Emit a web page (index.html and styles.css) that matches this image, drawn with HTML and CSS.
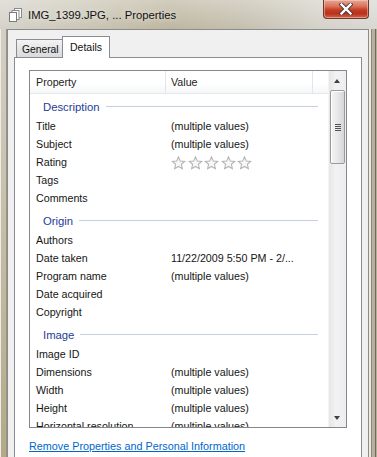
FILE: index.html
```html
<!DOCTYPE html>
<html lang="en">
<head>
    <meta charset="UTF-8">
    <title>IMG_1399.JPG, ... Properties</title>
    <link rel="stylesheet" href="styles.css">
</head>
<body>
    <div class="window">
        <!-- title bar -->
        <div class="titlebar">
            <svg class="app-icon" width="13" height="14" viewBox="0 0 13 14">
                <rect x="5.5" y="0.5" width="7" height="9" fill="#fff" stroke="#8a8a8a"/>
                <rect x="3" y="2.5" width="7" height="9" fill="#fff" stroke="#8a8a8a"/>
                <rect x="0.5" y="4.5" width="7" height="9" fill="#fff" stroke="#7a7a7a"/>
            </svg>
            <span class="title">IMG_1399.JPG, ... Properties</span>
            <div class="close-btn">
                <svg width="14" height="12" viewBox="0 0 14 12">
                    <path d="M2.5 1.5 L11.5 10.5 M11.5 1.5 L2.5 10.5" stroke="#4a3a36" stroke-width="4.2" stroke-linecap="square"/>
                    <path d="M2.5 1.5 L11.5 10.5 M11.5 1.5 L2.5 10.5" stroke="#fff" stroke-width="2.4" stroke-linecap="square"/>
                </svg>
            </div>
        </div>

        <div class="frame-body">
            <div class="frame-side left"></div>
            <div class="dialog">
                <!-- tabs -->
                <div class="tabs">
                    <div class="tab">General</div>
                    <div class="tab active">Details</div>
                </div>

                <div class="panel">
                    <div class="listview">
                        <div class="lv-main">
                            <div class="lv-header">
                                <div class="col-prop">Property</div>
                                <div class="col-val">Value</div>
                                <div class="col-rest"></div>
                            </div>
                            <div class="lv-body">
                                <div class="group first"><span>Description</span><i></i></div>
                                <div class="row"><span class="k">Title</span><span class="v">(multiple values)</span></div>
                                <div class="row"><span class="k">Subject</span><span class="v">(multiple values)</span></div>
                                <div class="row">
                                    <span class="k">Rating</span>
                                    <span class="v stars">
                                        <svg width="15" height="14" viewBox="0 0 14 13"><path d="M7 0.8 L8.7 4.6 L12.8 5 L9.7 7.7 L10.6 11.8 L7 9.7 L3.4 11.8 L4.3 7.7 L1.2 5 L5.3 4.6 Z" fill="#f7f7f7" stroke="#b4b4b4"/></svg>
                                        <svg width="15" height="14" viewBox="0 0 14 13"><path d="M7 0.8 L8.7 4.6 L12.8 5 L9.7 7.7 L10.6 11.8 L7 9.7 L3.4 11.8 L4.3 7.7 L1.2 5 L5.3 4.6 Z" fill="#f7f7f7" stroke="#b4b4b4"/></svg>
                                        <svg width="15" height="14" viewBox="0 0 14 13"><path d="M7 0.8 L8.7 4.6 L12.8 5 L9.7 7.7 L10.6 11.8 L7 9.7 L3.4 11.8 L4.3 7.7 L1.2 5 L5.3 4.6 Z" fill="#f7f7f7" stroke="#b4b4b4"/></svg>
                                        <svg width="15" height="14" viewBox="0 0 14 13"><path d="M7 0.8 L8.7 4.6 L12.8 5 L9.7 7.7 L10.6 11.8 L7 9.7 L3.4 11.8 L4.3 7.7 L1.2 5 L5.3 4.6 Z" fill="#f7f7f7" stroke="#b4b4b4"/></svg>
                                        <svg width="15" height="14" viewBox="0 0 14 13"><path d="M7 0.8 L8.7 4.6 L12.8 5 L9.7 7.7 L10.6 11.8 L7 9.7 L3.4 11.8 L4.3 7.7 L1.2 5 L5.3 4.6 Z" fill="#f7f7f7" stroke="#b4b4b4"/></svg>
                                    </span>
                                </div>
                                <div class="row"><span class="k">Tags</span><span class="v"></span></div>
                                <div class="row"><span class="k">Comments</span><span class="v"></span></div>

                                <div class="group"><span>Origin</span><i></i></div>
                                <div class="row"><span class="k">Authors</span><span class="v"></span></div>
                                <div class="row"><span class="k">Date taken</span><span class="v">11/22/2009 5:50 PM - 2/...</span></div>
                                <div class="row"><span class="k">Program name</span><span class="v">(multiple values)</span></div>
                                <div class="row"><span class="k">Date acquired</span><span class="v"></span></div>
                                <div class="row"><span class="k">Copyright</span><span class="v"></span></div>

                                <div class="group"><span>Image</span><i></i></div>
                                <div class="row"><span class="k">Image ID</span><span class="v"></span></div>
                                <div class="row"><span class="k">Dimensions</span><span class="v">(multiple values)</span></div>
                                <div class="row"><span class="k">Width</span><span class="v">(multiple values)</span></div>
                                <div class="row"><span class="k">Height</span><span class="v">(multiple values)</span></div>
                                <div class="row"><span class="k">Horizontal resolution</span><span class="v">(multiple values)</span></div>
                            </div>
                        </div>

                        <!-- vertical scrollbar -->
                        <div class="scrollbar">
                            <div class="sb-arrow up"></div>
                            <div class="sb-track">
                                <div class="sb-thumb"><div class="grip"></div></div>
                            </div>
                            <div class="sb-arrow down"></div>
                        </div>
                    </div>

                    <a class="remove-link" href="#">Remove Properties and Personal Information</a>
                </div>
            </div>
            <div class="frame-side right"></div>
        </div>
    </div>
</body>
</html>
```

FILE: styles.css
```css
/* page */
html, body {
    margin: 0;
    padding: 0;
}

body {
    width: 377px;
    height: 457px;
    overflow: hidden;
    font-family: "Liberation Sans", Arial, sans-serif;
    color: #111;
    background: #c9c4b4;
}

.window {
    display: flex;
    flex-direction: column;
    height: 457px;
    background: linear-gradient(to right, #d3d0c7 0%, #c9c4b3 20%, #bab29a 45%, #c2bcaa 65%, #d2cfc6 85%, #d7d5cf 100%);
}

/* title bar */
.titlebar {
    height: 29px;
    display: flex;
    align-items: center;
    padding: 0 8px 0 9px;
    background: linear-gradient(to bottom, rgba(255,255,255,0.35), rgba(255,255,255,0.05));
}

.app-icon {
    margin-top: 1px;
    margin-right: 6px;
}

.title {
    font-size: 11.3px;
    color: #111;
    text-shadow: 0 0 6px rgba(255, 255, 255, 0.8);
    margin-top: 1px;
}

.close-btn {
    margin-left: auto;
    align-self: flex-start;
    width: 44px;
    height: 18px;
    border: 1px solid #6a3a30;
    border-top: none;
    border-radius: 0 0 4px 4px;
    background: linear-gradient(to bottom, #e8a898 0%, #d9725a 35%, #c63d24 55%, #b8321c 75%, #d4644a 100%);
    box-shadow: inset 0 0 0 1px rgba(255, 220, 210, 0.45);
    display: flex;
    align-items: center;
    justify-content: center;
}

/* frame */
.frame-body {
    flex: 1;
    display: flex;
    min-height: 0;
}

.frame-side.left {
    width: 7px;
    background: linear-gradient(to bottom, #d2cfc6 0%, #c4bda6 50%, #b3a98a 100%);
    box-shadow: inset 3px 0 0 -2px #efece4, inset -2px 0 0 -1px #9c9480;
}

.frame-side.right {
    width: 8px;
    background: linear-gradient(to right, #ece9e2 0px, #ece9e2 2px, #8a8678 2px, #8a8678 3px, #b7b09a 3px, #b7b09a 6px, #6f6b5f 6px, #6f6b5f 7px, #b5ae98 7px);
}

.dialog {
    flex: 1;
    display: flex;
    flex-direction: column;
    min-height: 0;
    background: #f0f0f0;
    border: 1px solid #8c8c8c;
    border-bottom: none;
    padding: 6px 6px 0 6px;
}

/* tabs */
.tabs {
    display: flex;
    align-items: flex-end;
    height: 21px;
    padding-left: 2px;
    position: relative;
    z-index: 1;
}

.tab {
    font-size: 10.3px;
    box-sizing: border-box;
    width: 47px;
    height: 18px;
    padding: 4px 0 0 5px;
    border: 1px solid #898c95;
    border-bottom: none;
    background: linear-gradient(to bottom, #f3f3f3, #e3e3e3 60%, #dadada);
    color: #111;
}

.tab.active {
    height: 22px;
    margin-bottom: -1px;
    margin-left: -1px;
    width: 48px;
    padding: 4px 0 0 7px;
    background: #fff;
    font-size: 10.5px;
}

/* content panel */
.panel {
    flex: 1;
    background: #fff;
    border: 1px solid #898c95;
    border-bottom: none;
    padding: 12px 14px 0 14px;
}

.listview {
    width: 318px;
    height: 358px;
    box-sizing: border-box;
    border: 1px solid #828790;
    display: flex;
}

.lv-main {
    flex: 1;
    min-width: 0;
    display: flex;
    flex-direction: column;
}

.lv-header {
    height: 23px;
    display: flex;
    font-size: 10.7px;
    color: #222;
    background: linear-gradient(to bottom, #ffffff 0%, #ffffff 55%, #f5f6f7 100%);
    border-bottom: 1px solid #e3e6ea;
    box-sizing: border-box;
}

.lv-header > div {
    box-sizing: border-box;
    border-right: 1px solid #e3e5e8;
    line-height: 22px;
}

.col-prop {
    width: 136px;
    padding-left: 6px;
}

.col-val {
    width: 147px;
    padding-left: 5px;
}

.col-rest {
    flex: 1;
    border-right: none !important;
}

.lv-body {
    flex: 1;
    overflow: hidden;
    font-size: 10.7px;
}

.group {
    height: 24px;
    display: flex;
    align-items: center;
    padding: 3px 10px 0 13px;
    box-sizing: border-box;
    color: #1e3c96;
    font-size: 11.3px;
}

.group.first {
    height: 23px;
    padding-top: 2px;
}

.group i {
    flex: 1;
    height: 1px;
    margin-left: 6px;
    background: #c7d0e2;
}

.row {
    height: 18px;
    display: flex;
    align-items: center;
    color: #151515;
}

.row .k {
    width: 135px;
    padding-left: 6px;
    box-sizing: border-box;
    white-space: nowrap;
}

.row .v {
    padding-left: 6px;
    white-space: nowrap;
}

.stars {
    display: flex;
    gap: 1.6px;
    padding-left: 6px !important;
    margin-top: 1px;
}

/* scrollbar */
.scrollbar {
    width: 17px;
    display: flex;
    flex-direction: column;
    background: linear-gradient(to right, #e6e6e6, #f2f2f2 40%, #ededed);
    border-left: 1px solid #f4f4f4;
}

.sb-arrow {
    height: 17px;
    position: relative;
}

.sb-arrow::after {
    content: "";
    position: absolute;
    left: 5px;
    width: 0;
    height: 0;
    border-left: 3.5px solid transparent;
    border-right: 3.5px solid transparent;
}

.sb-arrow.up::after {
    top: 8px;
    border-bottom: 4px solid #404040;
}

.sb-arrow.down::after {
    top: 6px;
    border-top: 4px solid #404040;
}

.sb-track {
    flex: 1;
    padding-top: 2px;
}

.sb-thumb {
    height: 74px;
    margin: 0 1px;
    box-sizing: border-box;
    border: 1px solid #9a9a9a;
    border-radius: 2px;
    background: linear-gradient(to right, #f4f4f4, #e8e8e8 50%, #d6d6d6);
    box-shadow: inset 1px 1px 0 #fff;
    display: flex;
    align-items: center;
    justify-content: center;
}

.grip {
    width: 6px;
    height: 7px;
    background: repeating-linear-gradient(to bottom, #555 0px, #555 1px, transparent 1px, transparent 2px);
}

/* link */
.remove-link {
    display: block;
    margin-top: 12px;
    font-size: 10.8px;
    color: #0066cc;
    text-decoration: underline;
    white-space: nowrap;
}
```
